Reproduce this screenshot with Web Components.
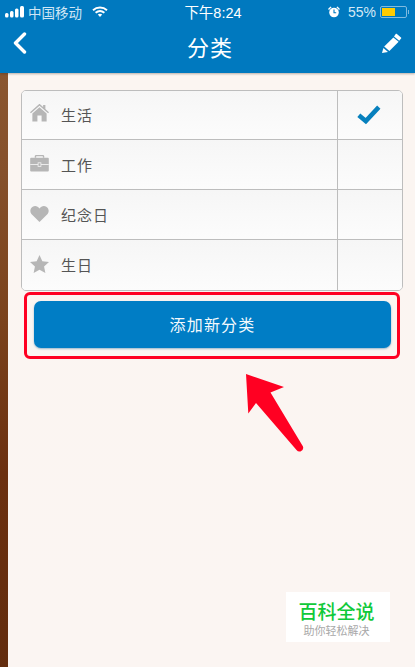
<!DOCTYPE html>
<html lang="zh">
<head>
<meta charset="utf-8">
<title>分类</title>
<style>
    html, body { margin: 0; padding: 0; height: 100%; }
    body { font-family: "Liberation Sans", "Noto Sans CJK SC", sans-serif; overflow: hidden; }
</style>
</head>
<body>
<app-page>
    <status-bar slot="top"></status-bar>
    <nav-bar slot="top" title="分类"></nav-bar>
    <category-table>
        <category-row label="生活" icon="home" checked></category-row>
        <category-row label="工作" icon="work"></category-row>
        <category-row label="纪念日" icon="heart"></category-row>
        <category-row label="生日" icon="star"></category-row>
    </category-table>
    <add-button>添加新分类</add-button>
    <red-arrow slot="over"></red-arrow>
    <water-mark slot="over"></water-mark>
</app-page>

<script>
class AppPage extends HTMLElement {
    constructor() {
        super();
        this.attachShadow({ mode: 'open' });
    }

    connectedCallback() {
        this.shadowRoot.innerHTML = /*html*/`
        <style>
            :host {
                display: flex;
                flex-direction: column;
                position: relative;
                width: 415px;
                height: 667px;
                overflow: hidden;
                background: #fbf5f2;
            }
            header {
                background: #0079bf;
                box-shadow: 0 1px 2px rgba(60, 40, 30, .35);
                position: relative;
                z-index: 1;
            }
            .body {
                flex: 1;
                display: flex;
            }
            .wood {
                width: 8px;
                background: linear-gradient(#8a5630 0, #85502b 100px, #7a421c 250px, #6b3010 400px, #5f2b0d 667px);
            }
            main {
                flex: 1;
                padding: 17px 12px 0 13px;
                background: linear-gradient(#fbf5f1, #fbf5f2);
            }
        </style>
        <header><slot name="top"></slot></header>
        <div class="body">
            <div class="wood"></div>
            <main><slot></slot></main>
        </div>
        <slot name="over"></slot>
        `;
    }
}

class StatusBar extends HTMLElement {
    constructor() {
        super();
        this.attachShadow({ mode: 'open' });
    }

    connectedCallback() {
        this.shadowRoot.innerHTML = /*html*/`
        <style>
            :host {
                display: grid;
                grid-template-columns: 1fr auto 1fr;
                align-items: center;
                height: 23px;
                padding: 0 6px 0 5px;
                color: #cfe6f5;
                font-size: 13.5px;
            }
            div { display: flex; align-items: center; }
            .left { gap: 4px; }
            .time { color: #fff; font-size: 14.5px; margin: 0 0 1px 12px; }
            .right { justify-content: flex-end; }
            .carrier { width: 55px; margin-right: 5px; }
            .pct { font-size: 14px; margin: 0 4px 0 8px; color: #d5e9f6; }
            .bat { width: 25px; height: 10px; border: 1px solid #7fbbe0; border-radius: 2px; position: relative; }
            .bat i { position: absolute; left: 1px; top: 1px; bottom: 1px; width: 13px; background: #ffcc00; }
            .nub { width: 1px; height: 4px; background: #7fbbe0; margin-left: 1px; }
        </style>
        <div class="left">
            <svg width="19" height="12" viewBox="0 0 19 12" fill="#fff">
                <rect x="0" y="7" width="3.500" height="4.500" rx="1.500"/>
                <rect x="5" y="5" width="3.500" height="6.500" rx="1.500"/>
                <rect x="10" y="2.500" width="3.500" height="9" rx="1.500"/>
                <rect x="15" y="0" width="4" height="11.500" rx="1.500"/>
            </svg>
            <span class="carrier">中国移动</span>
            <svg width="16" height="12" viewBox="0 0 16 12" fill="none" stroke="#fff" stroke-width="1.900">
                <path d="M1 4.200C5 .6 11 .6 15 4.200"/>
                <path d="M3.600 6.800c2.600-2.200 6.200-2.200 8.800 0"/>
                <path d="M5.800 8.400 8 11l2.200-2.600C8.900 7.400 7.100 7.400 5.800 8.400Z" fill="#fff" stroke="none"/>
            </svg>
        </div>
        <div class="time">下午8:24</div>
        <div class="right">
            <svg width="12" height="12" viewBox="0 0 12 12" fill="#fff">
                <circle cx="6" cy="6.500" r="4.800"/>
                <path d="M0 3 2.500.5 3.600 1.200 1 4ZM12 3 9.500.5 8.400 1.200 11 4Z"/>
                <path d="M6 3.500v3.200h2.200" fill="none" stroke="#0079bf" stroke-width="1.100"/>
            </svg>
            <span class="pct">55%</span>
            <div class="bat"><i></i></div>
            <div class="nub"></div>
        </div>
        `;
    }
}

class NavBar extends HTMLElement {
    constructor() {
        super();
        this.attachShadow({ mode: 'open' });
    }

    connectedCallback() {
        const title = this.getAttribute('title');
        this.removeAttribute('title');
        this.shadowRoot.innerHTML = /*html*/`
        <style>
            :host {
                display: flex;
                align-items: center;
                justify-content: space-between;
                height: 50px;
                padding: 0 13px 0 13px;
                color: #fff;
            }
            h1 { margin: 1px 0 0 11px; font-size: 22px; font-weight: 400; line-height: 1; letter-spacing: 1px; }
            svg { display: block; }
            .back { margin-bottom: 10px; }
            .edit { margin-bottom: 10px; }
        </style>
        <svg class="back" width="14" height="22" viewBox="0 0 14 22" fill="none" stroke="#fff" stroke-width="3.400" stroke-linecap="round" stroke-linejoin="round"><path d="M11.500 2 2.500 11l9 9"/></svg>
        <h1>${title}</h1>
        <svg class="edit" width="20" height="20" viewBox="0 0 20 20" fill="#fff">
            <path d="M14.600.8 19 4.400c.4.4.4.8.1 1.100l-1.900 2.300-5.200-4.400L13.700.9c.3-.3.6-.3.9-.1Z"/>
            <path d="M11.400 4.400 16.600 8.800 7.400 18 2.200 13.600Z"/>
            <path d="M1.400 14.900 6 18.900 0 20Z"/>
        </svg>
        `;
    }
}

class CategoryTable extends HTMLElement {
    constructor() {
        super();
        this.attachShadow({ mode: 'open' });
    }

    connectedCallback() {
        this.shadowRoot.innerHTML = /*html*/`
        <style>
            :host {
                display: block;
                border: 1px solid #bdbdbd;
                border-radius: 5px;
                overflow: hidden;
                background: #fafafa;
            }
        </style>
        <slot></slot>
        `;
    }
}

const ROW_ICONS = {
    home: `<g transform="translate(0 -1.400)"><path d="M10 .6 13.800 4V1.800h2.400v4.300L20 9.500l-1 1.200L10 2.800 1 10.700 0 9.500Z"/><path d="M10 4.400 17.500 11V19.400H12.200V13H7.800v6.400H2.500V11Z"/></g>`,
    work: `<path d="M6.500 1.500h7c.9 0 1.500.6 1.500 1.500V4.500H13.500V3h-7V4.500H5V3C5 2.100 5.600 1.500 6.500 1.500Z"/><rect x=".2" y="4.500" width="19.600" height="14.500" rx="1"/><rect x=".2" y="11.200" width="19.600" height=".9" fill="#f4f4f4"/><rect x="8.500" y="9.800" width="3" height="3.800" fill="#b6b6b6" stroke="#f4f4f4" stroke-width=".8"/>`,
    heart: `<g transform="translate(0 1)"><path d="M10 18.500 2 10.700C-.6 8 .0 3.800 2.900 2.300 5.400 1 8.400 1.800 10 4.300 11.600 1.800 14.600 1 17.100 2.300 20 3.800 20.600 8 18 10.700Z"/></g>`,
    star: `<path d="M10 .5 13 7l7 .8-5.200 4.800 1.400 7L10 16.100 3.800 19.600l1.400-7L0 7.800 7 7Z"/>`
};

class CategoryRow extends HTMLElement {
    constructor() {
        super();
        this.attachShadow({ mode: 'open' });
    }

    connectedCallback() {
        const check = this.hasAttribute('checked')
            ? `<svg width="24" height="20" viewBox="0 0 24 20" fill="none" stroke="#0780bd" stroke-width="4.600"><path d="M1.800 10.200 8.800 16 21.800 2.200"/></svg>`
            : '';
        this.shadowRoot.innerHTML = /*html*/`
        <style>
            :host {
                display: grid;
                grid-template-columns: 1fr 65px;
                height: 49px;
                border-top: 1px solid #bdbdbd;
                background: linear-gradient(#f6f6f6, #fcfcfc);
            }
            :host(:first-child) { border-top: 0; height: 48px; }
            :host(:last-child) { height: 50px; }
            .name {
                display: flex;
                align-items: center;
                gap: 12px;
                padding: 0 0 1px 8px;
                color: #555;
                font-size: 15px;
                letter-spacing: 1px;
            }
            .name svg { margin-bottom: 2px; }
            .mark {
                display: flex;
                align-items: center;
                justify-content: center;
                padding-right: 3px;
                border-left: 1px solid #bdbdbd;
            }
        </style>
        <div class="name">
            <svg width="19" height="20" viewBox="0 0 20 20" fill="#b6b6b6">${ROW_ICONS[this.getAttribute('icon')]}</svg>
            <span>${this.getAttribute('label')}</span>
        </div>
        <div class="mark">${check}</div>
        `;
    }
}

class AddButton extends HTMLElement {
    constructor() {
        super();
        this.attachShadow({ mode: 'open' });
    }

    connectedCallback() {
        this.shadowRoot.innerHTML = /*html*/`
        <style>
            :host {
                display: block;
                box-sizing: border-box;
                width: 376px;
                height: 67px;
                margin: 1px 0 0 3px;
                padding: 6px 6px 0 7px;
                border: 3px solid #ff0022;
                border-radius: 6px;
            }
            button {
                display: block;
                width: 100%;
                height: 47px;
                border: 0;
                border-radius: 7px;
                background: #007dc5;
                box-shadow: 0 1px 2px rgba(0, 90, 150, .4);
                color: #f4fafd;
                font: 400 16px "Liberation Sans", "Noto Sans CJK SC", sans-serif;
                letter-spacing: 1.200px;
                padding: 0 0 1px;
            }
        </style>
        <button type="button"><slot></slot></button>
        `;
    }
}

class RedArrow extends HTMLElement {
    constructor() {
        super();
        this.attachShadow({ mode: 'open' });
    }

    connectedCallback() {
        this.shadowRoot.innerHTML = /*html*/`
        <style>
            :host { position: absolute; left: 240px; top: 370px; display: block; line-height: 0; }
        </style>
        <svg width="70" height="86" viewBox="240 370 70 86">
            <path fill="#ff0022" d="M246 374 284 387 270.500 392.500 303 446.500Q304 450 300.500 451.500 298 452 296.500 450L256 403 248.300 413.500Z"/>
        </svg>
        `;
    }
}

class WaterMark extends HTMLElement {
    constructor() {
        super();
        this.attachShadow({ mode: 'open' });
    }

    connectedCallback() {
        this.shadowRoot.innerHTML = /*html*/`
        <style>
            :host {
                position: absolute;
                left: 286px;
                top: 592px;
                box-sizing: border-box;
                width: 104px;
                height: 50px;
                padding-right: 3px;
                display: flex;
                flex-direction: column;
                align-items: center;
                background: #fff;
                text-align: center;
            }
            b { margin-top: 11px; font-size: 19px; font-weight: 500; line-height: 20px; color: #10c93a; }
            span { margin-top: 1px; font-size: 11px; line-height: 14px; color: #a8a8a8; }
        </style>
        <b>百科全说</b>
        <span>助你轻松解决</span>
        `;
    }
}

customElements.define('app-page', AppPage);
customElements.define('status-bar', StatusBar);
customElements.define('nav-bar', NavBar);
customElements.define('category-table', CategoryTable);
customElements.define('category-row', CategoryRow);
customElements.define('add-button', AddButton);
customElements.define('red-arrow', RedArrow);
customElements.define('water-mark', WaterMark);
</script>
</body>
</html>
